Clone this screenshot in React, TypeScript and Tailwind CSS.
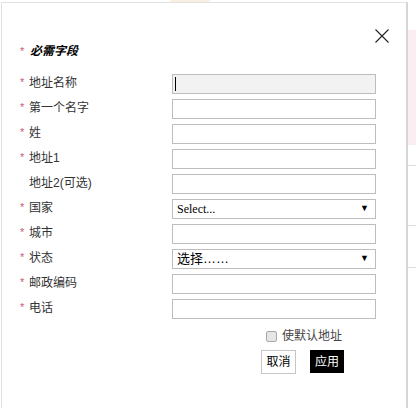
const rows: { label: string; req: boolean; kind: "input" | "select"; value?: string; active?: boolean }[] = [
  { label: "地址名称", req: true, kind: "input", active: true },
  { label: "第一个名字", req: true, kind: "input" },
  { label: "姓", req: true, kind: "input" },
  { label: "地址1", req: true, kind: "input" },
  { label: "地址2(可选)", req: false, kind: "input" },
  { label: "国家", req: true, kind: "select", value: "Select..." },
  { label: "城市", req: true, kind: "input" },
  { label: "状态", req: true, kind: "select", value: "选择……" },
  { label: "邮政编码", req: true, kind: "input" },
  { label: "电话", req: true, kind: "input" },
];

const Star = () => <span className="w-[8px] text-[11px] text-[#c7597a]">*</span>;

export default function App() {
  return (
    <div
      className="relative w-[416px] h-[408px] overflow-hidden bg-white text-[#333]"
      style={{ fontFamily: '"Liberation Sans", "Noto Sans CJK SC", sans-serif' }}
    >
      {/* page behind the dialog */}
      <div className="absolute right-0 top-[30px] w-[10px] h-[115px] bg-[#fbeef2]" />
      <div className="absolute right-0 top-[165px] w-[10px] border-t border-[#ddd]" />
      <div className="absolute right-0 top-[225px] w-[10px] border-t border-[#ddd]" />
      <div className="absolute right-0 top-[267px] w-[10px] border-t border-[#ddd]" />
      <div className="absolute left-[170px] top-[-6px] w-[40px] h-[14px] rounded-full bg-[#f3e6cf] opacity-60" />

      <div className="absolute left-[1px] top-[2px] w-[407px] h-[420px] bg-white border-l border-t border-[#e2e2e2] border-r-2 border-r-[#d6d6d6]">
        <button className="absolute left-[372px] top-[25px] w-[16px] h-[16px]">
          <svg viewBox="0 0 16 16" width="16" height="16">
            <path d="M1.5 1.5 L14.5 14.5 M14.5 1.5 L1.5 14.5" stroke="#222" strokeWidth="1.1" fill="none" />
          </svg>
        </button>

        <div className="pl-[18px] pt-[40px]">
          <div className="flex items-center h-[16px] mb-[15px]">
            <Star />
            <span className="ml-[2px] text-[12px] font-bold italic text-black">必需字段</span>
          </div>

          {rows.map((r) => (
            <div key={r.label} className="flex items-center h-[20px] mb-[5px]">
              <div className="flex items-center w-[152px] text-[12px] -mt-[3px]">
                {r.req ? <Star /> : <span className="w-[8px]" />}
                <span className="ml-[1px]">{r.label}</span>
              </div>
              {r.kind === "input" ? (
                <div
                  className={
                    "w-[204px] h-[20px] border border-[#bdbdbd] flex items-center pl-[2px] " +
                    (r.active ? "bg-[#f2f2f2]" : "bg-white")
                  }
                >
                  {r.active && <span className="w-px h-[14px] bg-black" />}
                </div>
              ) : (
                <div className="w-[204px] h-[20px] border border-[#bdbdbd] bg-white flex items-center justify-between pl-[4px] pr-[6px]">
                  <span
                    className={r.value === "Select..." ? "text-[12px] text-black" : "text-[13px] text-black"}
                    style={r.value === "Select..." ? { fontFamily: '"Liberation Serif", serif' } : undefined}
                  >
                    {r.value}
                  </span>
                  <span className="text-[9px] text-black">▼</span>
                </div>
              )}
            </div>
          ))}

          <div className="flex items-center ml-[246px] mt-[9px] h-[16px]">
            <span className="w-[11px] h-[11px] rounded-[2px] border border-[#a9a9a9] bg-[#e6e6e6]" />
            <span className="ml-[5px] text-[12px] text-[#444]">使默认地址</span>
          </div>

          <div className="flex ml-[241px] mt-[6px] gap-[14px]">
            <button className="w-[35px] h-[24px] border border-[#c6c6c6] bg-white text-[12px] text-black">取消</button>
            <button className="w-[34px] h-[23px] bg-black text-[12px] text-white">应用</button>
          </div>
        </div>
      </div>
    </div>
  );
}
